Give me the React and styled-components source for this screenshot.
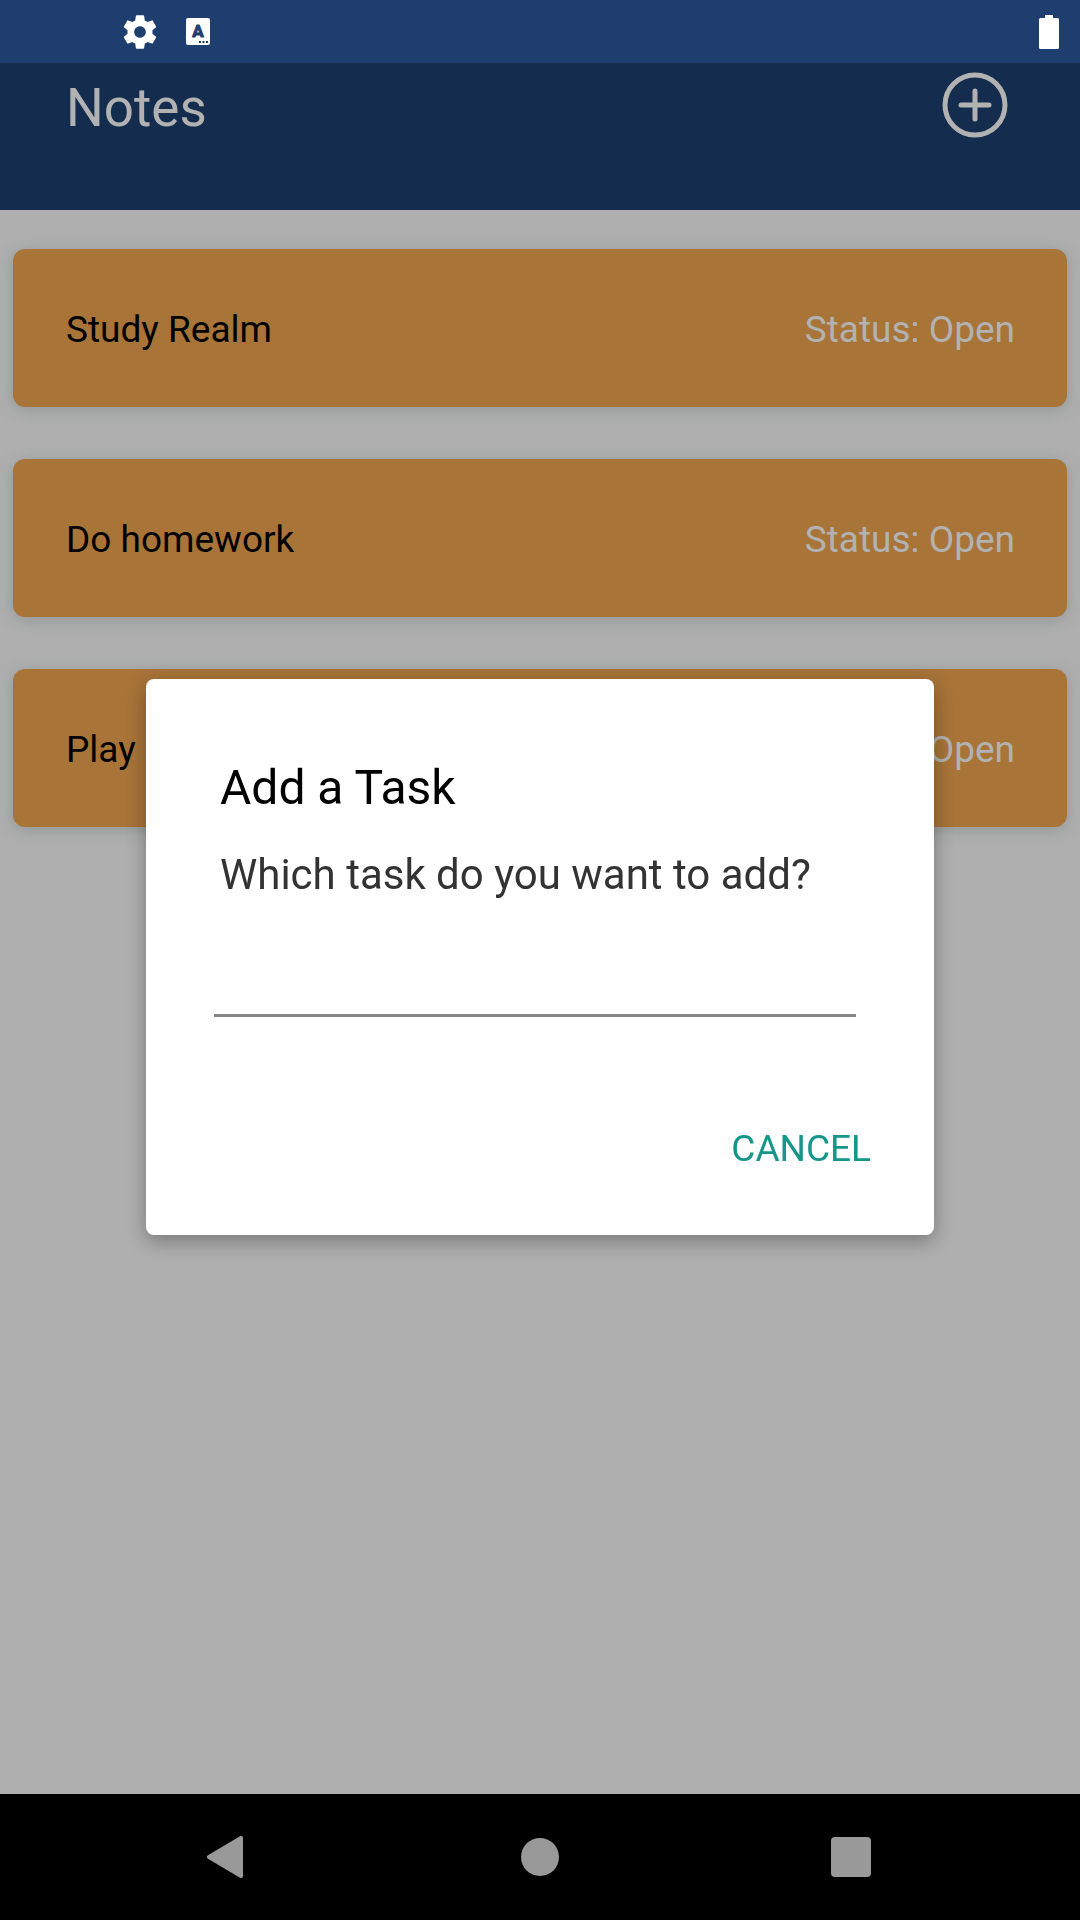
import React, { useState } from "react";
import styled, { createGlobalStyle } from "styled-components";

const GlobalStyle = createGlobalStyle`
  *, *::before, *::after { box-sizing: border-box; }
  body {
    margin: 0;
    background: #afafaf;
    font-family: Roboto, "Liberation Sans", sans-serif;
  }
  button, input { font: inherit; border: 0; background: none; padding: 0; }
  button { cursor: pointer; }
  svg { display: block; }
`;

const Screen = styled.div`
  display: flex;
  flex-direction: column;
  min-height: 100vh;
`;

const StatusBar = styled.div`
  display: flex;
  align-items: center;
  justify-content: space-between;
  height: 63px;
  padding: 0 20px 0 120px;
  background: #1e3e6f;
`;

const StatusGroup = styled.div`
  display: flex;
  align-items: center;
  gap: 26px;
`;

const Header = styled.header`
  display: flex;
  align-items: flex-start;
  justify-content: space-between;
  height: 147px;
  padding: 0 66px;
  background: #142c4d;
`;

const Title = styled.h1`
  margin: 0;
  font-size: 53px;
  font-weight: 400;
  line-height: 90px;
  color: #b2b2b2;
`;

const AddButton = styled.button`
  display: grid;
  place-items: center;
  width: 78px;
  height: 84px;
`;

const TaskList = styled.ul`
  flex: 1;
  display: flex;
  flex-direction: column;
  gap: 52px;
  margin: 0;
  padding: 39px 13px;
  list-style: none;
`;

const TaskCard = styled.li`
  display: flex;
  align-items: center;
  justify-content: space-between;
  height: 158px;
  padding: 4px 52px 0 53px;
  border-radius: 12px;
  background: #a87438;
  box-shadow: 0 3px 16px rgba(110, 124, 120, 0.45);
  font-size: 37px;
  line-height: 44px;
`;

const TaskName = styled.span`
  color: #000;
`;

const TaskStatus = styled.span`
  color: #b2b2b2;
`;

const NavBar = styled.nav`
  display: flex;
  height: 126px;
  padding: 0 73px;
  background: #000;
`;

const NavButton = styled.button`
  flex: 1;
  display: grid;
  place-items: center;
`;

const Overlay = styled.div`
  position: fixed;
  inset: 0;
  display: flex;
  align-items: center;
  padding: 0 146px 6px;
`;

const Dialog = styled.form`
  flex: 1;
  display: flex;
  flex-direction: column;
  padding: 81px 51px 51px 68px;
  border-radius: 8px;
  background: #fff;
  box-shadow: 0 6px 20px rgba(0, 0, 0, 0.32);
`;

const DialogTitle = styled.h2`
  margin: 0;
  padding-left: 6px;
  font-size: 48px;
  font-weight: 400;
  line-height: 56px;
  color: #000;
`;

const DialogMessage = styled.label`
  margin-top: 34px;
  padding-left: 6px;
  font-size: 42px;
  line-height: 50px;
  color: #333;
`;

const TaskInput = styled.input`
  height: 61px;
  margin: 56px 27px 0 0;
  border-bottom: 3px solid #858585;
  border-radius: 0;
  font-size: 42px;
  outline: none;
`;

const DialogActions = styled.div`
  display: flex;
  justify-content: flex-end;
  margin-top: 97px;
`;

const DialogButton = styled.button`
  height: 70px;
  padding: 0 12px;
  font-size: 37px;
  line-height: 44px;
  color: #169689;
`;

const GearIcon = () => (
  <svg width="40" height="40" viewBox="0 0 24 24" fill="#fff" aria-hidden="true">
    <path d="M19.43 12.98c.04-.32.07-.64.07-.98s-.03-.66-.07-.98l2.11-1.65c.19-.15.24-.42.12-.64l-2-3.46c-.12-.22-.39-.3-.61-.22l-2.49 1c-.52-.4-1.08-.73-1.69-.98l-.38-2.65C14.46 2.18 14.25 2 14 2h-4c-.25 0-.46.18-.49.42l-.38 2.65c-.61.25-1.17.59-1.69.98l-2.49-1c-.23-.09-.49 0-.61.22l-2 3.46c-.13.22-.07.49.12.64l2.11 1.65c-.04.32-.07.65-.07.98s.03.66.07.98l-2.11 1.65c-.19.15-.24.42-.12.64l2 3.46c.12.22.39.3.61.22l2.49-1c.52.4 1.08.73 1.69.98l.38 2.65c.03.24.24.42.49.42h4c.25 0 .46-.18.49-.42l.38-2.65c.61-.25 1.17-.59 1.69-.98l2.49 1c.23.09.49 0 .61-.22l2-3.46c.12-.22.07-.49-.12-.64l-2.11-1.65zM12 15.5c-1.93 0-3.500-1.570-3.500-3.500s1.570-3.500 3.500-3.500 3.500 1.570 3.500 3.500-1.570 3.500-3.500 3.500z" />
  </svg>
);

const KeyboardIcon = () => (
  <svg width="24" height="27" viewBox="0 0 24 27" aria-hidden="true">
    <rect width="24" height="27" rx="2" fill="#fff" />
    <text
      x="12"
      y="19"
      textAnchor="middle"
      fontSize="17"
      fontWeight="700"
      fill="#1e3e6f"
      stroke="#1e3e6f"
      strokeWidth="1"
      strokeLinejoin="round"
    >
      A
    </text>
    <path d="M13 23h2v2h-2zM16.500 23h2v2h-2zM20 23h2v2h-2z" fill="#1e3e6f" />
  </svg>
);

const BatteryIcon = () => (
  <svg width="22" height="34" viewBox="0 0 22 34" fill="#fff" aria-hidden="true">
    <path d="M7 0h8v3h4.500a1.500 1.500 0 0 1 1.500 1.500v28a1.500 1.500 0 0 1-1.500 1.500h-17a1.500 1.500 0 0 1-1.500-1.500v-28a1.500 1.500 0 0 1 1.500-1.500h4.500z" />
  </svg>
);

const AddIcon = () => (
  <svg width="66" height="66" viewBox="0 0 66 66" fill="none" stroke="#b2b2b2" strokeWidth="5" strokeLinecap="round" aria-hidden="true">
    <circle cx="33" cy="33" r="30" />
    <path d="M33 19v28M19 33h28" />
  </svg>
);

const navItems = [
  {
    label: "Back",
    icon: <path d="M8 21L40 2v38z" strokeWidth="4" strokeLinejoin="round" />,
  },
  { label: "Home", icon: <circle cx="28" cy="21" r="19" stroke="none" /> },
  {
    label: "Recent apps",
    icon: <rect x="8" y="1" width="40" height="40" rx="4" stroke="none" />,
  },
];

const tasks = [
  { name: "Study Realm", status: "Open" },
  { name: "Do homework", status: "Open" },
  { name: "Play", status: "Open" },
];

export default function App() {
  const [open, setOpen] = useState(true);
  const [task, setTask] = useState("");

  return (
    <>
      <GlobalStyle />
      <Screen>
        <StatusBar>
          <StatusGroup>
            <GearIcon />
            <KeyboardIcon />
          </StatusGroup>
          <BatteryIcon />
        </StatusBar>
        <Header>
          <Title>Notes</Title>
          <AddButton type="button" aria-label="Add a task" onClick={() => setOpen(true)}>
            <AddIcon />
          </AddButton>
        </Header>
        <TaskList>
          {tasks.map((item) => (
            <TaskCard key={item.name}>
              <TaskName>{item.name}</TaskName>
              <TaskStatus>Status: {item.status}</TaskStatus>
            </TaskCard>
          ))}
        </TaskList>
        <NavBar>
          {navItems.map((item) => (
            <NavButton key={item.label} type="button" aria-label={item.label}>
              <svg width="56" height="42" viewBox="0 0 56 42" fill="#999" stroke="#999" aria-hidden="true">
                {item.icon}
              </svg>
            </NavButton>
          ))}
        </NavBar>
      </Screen>
      {open && (
        <Overlay>
          <Dialog role="dialog" aria-labelledby="dialog-title" onSubmit={(e) => e.preventDefault()}>
            <DialogTitle id="dialog-title">Add a Task</DialogTitle>
            <DialogMessage htmlFor="task-name">Which task do you want to add?</DialogMessage>
            <TaskInput
              id="task-name"
              type="text"
              value={task}
              onChange={(e) => setTask(e.target.value)}
            />
            <DialogActions>
              <DialogButton type="button" onClick={() => setOpen(false)}>CANCEL</DialogButton>
            </DialogActions>
          </Dialog>
        </Overlay>
      )}
    </>
  );
}
